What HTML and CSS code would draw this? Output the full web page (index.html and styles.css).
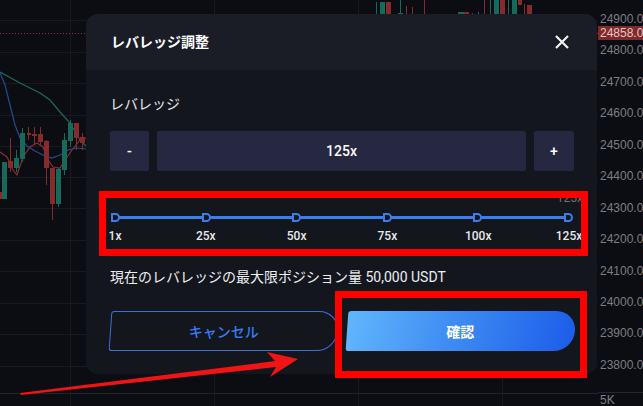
FILE: index.html
```html
<!DOCTYPE html>
<html>

<head>
    <meta charset="utf-8">
    <title>レバレッジ調整</title>
    <link rel="stylesheet" href="styles.css">
</head>

<body>
    <div class="screen">
        <!-- Candle chart behind the dialog -->
        <div class="chart">
            <svg width="598" height="406" viewBox="0 0 598 406">
                <g class="grid">
                    <line x1="0" y1="20.5" x2="598" y2="20.5" />
                    <line x1="0" y1="52.5" x2="598" y2="52.5" />
                    <line x1="0" y1="83.5" x2="598" y2="83.5" />
                    <line x1="0" y1="115.5" x2="598" y2="115.5" />
                    <line x1="0" y1="146.5" x2="598" y2="146.5" />
                    <line x1="0" y1="177.5" x2="598" y2="177.5" />
                    <line x1="0" y1="208.5" x2="598" y2="208.5" />
                    <line x1="0" y1="240.5" x2="598" y2="240.5" />
                    <line x1="0" y1="271.5" x2="598" y2="271.5" />
                    <line x1="0" y1="303.5" x2="598" y2="303.5" />
                    <line x1="0" y1="334.5" x2="598" y2="334.5" />
                    <line x1="0" y1="366.5" x2="598" y2="366.5" />
                    <line x1="70.5" y1="0" x2="70.5" y2="406" />
                    <line x1="214.5" y1="0" x2="214.5" y2="406" />
                    <line x1="358.5" y1="0" x2="358.5" y2="406" />
                    <line x1="502.5" y1="0" x2="502.5" y2="406" />
                    <line x1="0" y1="393.5" x2="598" y2="393.5" class="pane" />
                </g>
                <line x1="0" y1="33.5" x2="598" y2="33.5" class="last-line" />

                <polyline class="ma ma-green" points="0,72 20,83 40,93 50,100 60,112 70,123 80,140 86,146" />
                <polyline class="ma ma-blue" points="0,73 5,85 10,105 15,125 20,138 27,146 35,151 45,156 52,158 60,155 68,150 76,148 86,149" />
                <polyline class="ma ma-red" points="0,152 7,157 13,170 17,175 23,157 30,147 37,143 43,147 48,160 53,167 60,168 65,160 72,150 80,140 86,138" />

                <g class="up">
                    <rect x="2" y="162" width="5" height="37" />
                    <rect x="16" y="150" width="1" height="22" />
                    <rect x="14" y="158" width="5" height="10" />
                    <rect x="22" y="128" width="1" height="34" />
                    <rect x="20" y="133" width="5" height="26" />
                    <rect x="58" y="168" width="1" height="39" />
                    <rect x="56" y="169" width="5" height="35" />
                    <rect x="64" y="133" width="1" height="42" />
                    <rect x="62" y="140" width="5" height="30" />
                    <rect x="70" y="120" width="1" height="27" />
                    <rect x="68" y="123" width="5" height="18" />

                    <rect x="376" y="2" width="1" height="14" />
                    <rect x="380" y="2" width="5" height="14" />
                    <rect x="400" y="0" width="1" height="16" />
                    <rect x="398" y="13" width="5" height="1" />
                    <rect x="458" y="12" width="6" height="4" />
                    <rect x="478" y="12" width="1" height="4" />
                    <rect x="490" y="0" width="1" height="16" />
                    <rect x="494" y="0" width="5" height="16" />
                    <rect x="508" y="0" width="1" height="16" />
                    <rect x="512" y="0" width="5" height="16" />
                </g>
                <g class="down">
                    <rect x="0" y="192" width="2" height="7" />
                    <rect x="10" y="138" width="1" height="34" />
                    <rect x="8" y="161" width="5" height="7" />
                    <rect x="28" y="127" width="1" height="13" />
                    <rect x="27" y="133" width="4" height="2" />
                    <rect x="34" y="127" width="1" height="18" />
                    <rect x="32" y="134" width="5" height="2" />
                    <rect x="40" y="127" width="1" height="18" />
                    <rect x="38" y="134" width="5" height="8" />
                    <rect x="46" y="140" width="1" height="45" />
                    <rect x="44" y="141" width="5" height="27" />
                    <rect x="52" y="168" width="1" height="52" />
                    <rect x="50" y="168" width="5" height="36" />
                    <rect x="76" y="123" width="1" height="27" />
                    <rect x="74" y="123" width="5" height="15" />
                    <rect x="82" y="133" width="1" height="17" />
                    <rect x="80" y="137" width="5" height="6" />

                    <rect x="386" y="2" width="5" height="14" />
                    <rect x="406" y="6" width="1" height="10" />
                    <rect x="412" y="7" width="1" height="9" />
                    <rect x="424" y="0" width="1" height="16" />
                    <rect x="464" y="12" width="5" height="4" />
                    <rect x="472" y="13" width="1" height="3" />
                    <rect x="484" y="0" width="1" height="16" />
                    <rect x="500" y="0" width="5" height="16" />
                    <rect x="518" y="0" width="4" height="5" />
                    <rect x="524" y="4" width="1" height="12" />
                    <rect x="527" y="5" width="5" height="11" />
                </g>
            </svg>
        </div>

        <!-- Price scale -->
        <div class="axis">
            <span class="axis-label">24900.0</span>
            <span class="axis-label">24800.0</span>
            <span class="axis-label">24700.0</span>
            <span class="axis-label">24600.0</span>
            <span class="axis-label">24500.0</span>
            <span class="axis-label">24400.0</span>
            <span class="axis-label">24300.0</span>
            <span class="axis-label">24200.0</span>
            <span class="axis-label">24100.0</span>
            <span class="axis-label">24000.0</span>
            <span class="axis-label">23900.0</span>
            <span class="axis-label">23800.0</span>
            <span class="axis-foot">5K</span>
            <span class="axis-last">24858.0</span>
        </div>

        <!-- Leverage dialog -->
        <div class="modal">
            <div class="modal-head">
                <h1 class="modal-title">レバレッジ調整</h1>
                <button class="close" aria-label="close">
                    <svg viewBox="0 0 14 14" width="14" height="14">
                        <path d="M1 1 13 13M13 1 1 13" />
                    </svg>
                </button>
            </div>
            <div class="modal-body">
                <div class="field-label">レバレッジ</div>
                <div class="stepper">
                    <button class="step-btn">-</button>
                    <div class="step-value">125x</div>
                    <button class="step-btn">+</button>
                </div>
                <div class="slider">
                    <span class="slider-tip">125x</span>
                    <div class="track">
                        <span class="node"></span>
                        <span class="node"></span>
                        <span class="node"></span>
                        <span class="node"></span>
                        <span class="node"></span>
                        <span class="node"></span>
                    </div>
                    <div class="marks">
                        <span>1x</span>
                        <span>25x</span>
                        <span>50x</span>
                        <span>75x</span>
                        <span>100x</span>
                        <span>125x</span>
                    </div>
                </div>
                <p class="info">現在のレバレッジの最大限ポジション量 50,000 USDT</p>
                <div class="actions">
                    <button class="btn btn-cancel">キャンセル</button>
                    <button class="btn btn-ok">確認</button>
                </div>
            </div>
        </div>

        <!-- Annotations drawn over the screenshot -->
        <div class="mark mark-slider"></div>
        <div class="mark mark-ok"></div>
        <svg class="arrow" width="643" height="406" viewBox="0 0 643 406">
            <polygon points="20,393 275,361 267,352 298,359 270,377 276,367 21,395" />
        </svg>
    </div>
</body>

</html>
```

FILE: styles.css
```css
* {
    box-sizing: border-box;
}

body {
    margin: 0;
    background-color: #0c0d12;
    font-family: Roboto, "Noto Sans CJK JP", sans-serif;
}

.screen {
    position: relative;
    width: 643px;
    height: 406px;
    display: flex;
    overflow: hidden;
}

/* Chart */
.chart {
    width: 598px;
}

.chart svg {
    display: block;
}

.grid line {
    stroke: #181a21;
    stroke-width: 1;
}

.grid .pane {
    stroke: #22242b;
}

.last-line {
    stroke: #7d3a4a;
    stroke-width: 1;
    stroke-dasharray: 1 2;
}

.ma {
    fill: none;
    stroke-width: 1.2;
}

.ma-green {
    stroke: #1c6b55;
}

.ma-blue {
    stroke: #294894;
}

.ma-red {
    stroke: #8a2c3a;
}

.up rect {
    fill: #17695a;
}

.down rect {
    fill: #862b2b;
}

/* Price scale */
.axis {
    position: relative;
    width: 45px;
    padding: 4px 0 0 2px;
    display: flex;
    flex-direction: column;
    font-family: "Liberation Sans", sans-serif;
    font-size: 12px;
    color: #7b7e87;
    white-space: nowrap;
}

.axis-label {
    height: 31.45px;
    line-height: 31.45px;
}

.axis-foot {
    margin-top: auto;
    margin-left: -2px;
    padding-left: 2px;
    height: 14px;
    line-height: 14px;
    border-top: 1px solid #25272e;
}

.axis-last {
    position: absolute;
    top: 26px;
    left: 0;
    right: 0;
    height: 14px;
    line-height: 14px;
    padding-left: 2px;
    background-color: #80292b;
    color: #e3c6c6;
}

/* Dialog */
.modal {
    position: absolute;
    left: 86px;
    top: 14px;
    width: 511px;
    height: 360px;
    border-radius: 12px;
    overflow: hidden;
    background-color: #14161e;
}

.modal-head {
    height: 56px;
    padding: 0 28px 0 25px;
    display: flex;
    align-items: center;
    justify-content: space-between;
    background-color: #1a1c26;
}

.modal-title {
    margin: 0;
    font-size: 14px;
    font-weight: 700;
    line-height: 20px;
    color: #ffffff;
}

.close {
    padding: 0;
    border: 0;
    background: none;
    display: flex;
}

.close path {
    stroke: #f2f2f2;
    stroke-width: 2.2;
    fill: none;
}

.modal-body {
    padding: 0 23px 0 24px;
}

.field-label {
    margin-top: 24px;
    font-size: 14px;
    line-height: 20px;
    color: #e4e5e8;
}

.stepper {
    margin-top: 17px;
    height: 40px;
    display: flex;
    gap: 8px;
}

.step-btn,
.step-value {
    border: 0;
    border-radius: 2px;
    background-color: #252840;
    color: #ffffff;
    font-family: Roboto, sans-serif;
    font-size: 14px;
    font-weight: 500;
    display: flex;
    align-items: center;
    justify-content: center;
}

.step-btn {
    width: 39px;
    padding: 0;
}

.step-btn:last-child {
    width: 40px;
}

.step-value {
    flex: 1;
}

/* Leverage slider */
.slider {
    position: relative;
    margin-top: 19px;
    padding-top: 22px;
}

/* sits partly under the red annotation frame */
.slider-tip {
    position: absolute;
    top: 1px;
    right: -9px;
    font-size: 12px;
    line-height: 14px;
    color: #6d707a;
}

.track {
    position: relative;
    height: 10px;
    padding: 0 1px;
    display: flex;
    align-items: center;
    justify-content: space-between;
}

.track::before {
    content: "";
    position: absolute;
    left: 5px;
    right: 5px;
    top: 4px;
    height: 3px;
    background-color: #3b7de9;
}

.node {
    position: relative;
    width: 9px;
    height: 9px;
    border: 2px solid #3b7de9;
    border-radius: 0 5px 5px 0;
    background-color: #14161e;
}

.marks {
    margin: 6px -10px 0;
    display: flex;
    justify-content: space-between;
    font-size: 12px;
    font-weight: 500;
    line-height: 16px;
    color: #e8e9ec;
}

.marks span {
    width: 30px;
    text-align: center;
}

.info {
    margin: 23px 0 0;
    font-size: 14px;
    line-height: 20px;
    color: #eceef1;
}

/* Buttons */
.actions {
    margin-top: 24px;
    height: 40px;
    display: flex;
    gap: 9px;
}

.btn {
    position: relative;
    z-index: 0;
    flex: 1;
    padding: 0;
    border: 0;
    background: none;
    font-family: "Noto Sans CJK JP", sans-serif;
    font-size: 14px;
    font-weight: 700;
}

.btn::before {
    content: "";
    position: absolute;
    inset: 0;
    border-radius: 3px 20px 20px 3px;
    transform: skewX(-4deg);
    z-index: -1;
}

.btn-cancel {
    color: #3b7cf0;
    font-weight: 500;
}

.btn-cancel::before {
    border: 1px solid #3a6ee2;
}

.btn-ok {
    color: #ffffff;
}

.btn-ok::before {
    background: linear-gradient(100deg, #62b6fc 0%, #3f8df3 45%, #1c5ce9 100%);
}

/* Red annotation boxes and arrow */
.mark {
    position: absolute;
    border: 7px solid #ff0000;
}

.mark-slider {
    left: 99px;
    top: 191px;
    width: 489px;
    height: 65px;
}

.mark-ok {
    left: 335px;
    top: 291px;
    width: 252px;
    height: 87px;
}

.arrow {
    position: absolute;
    left: 0;
    top: 0;
    pointer-events: none;
}

.arrow polygon {
    fill: #f01414;
}
```
